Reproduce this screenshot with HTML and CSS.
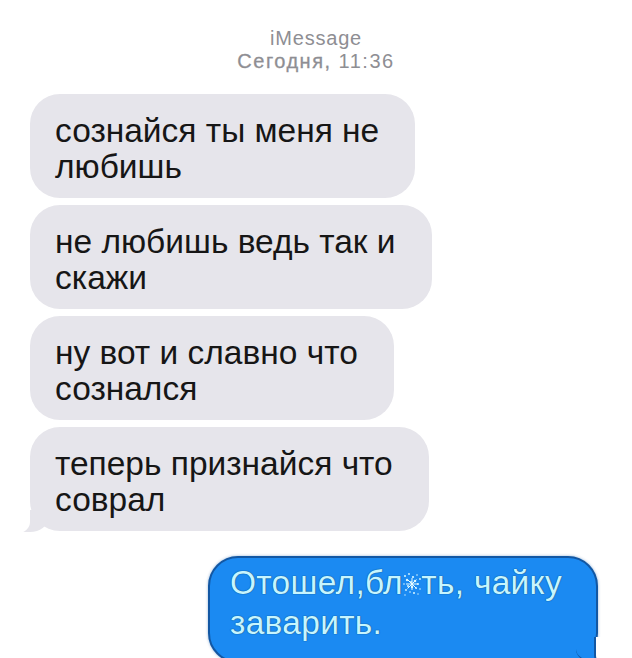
FILE: index.html
```html
<!DOCTYPE html>
<html lang="ru">
<head>
<meta charset="utf-8">
<title>iMessage</title>
<link rel="stylesheet" href="styles.css">
</head>
<body>
<div class="thread">
  <header class="thread-head">
    <div class="service">iMessage</div>
    <div class="stamp"><span class="day">Сегодня,</span> 11:36</div>
  </header>

  <div class="msgs">
    <div class="bubble in">сознайся ты меня не<br>любишь</div>
    <div class="bubble in">не любишь ведь так и<br>скажи</div>
    <div class="bubble in">ну вот и славно что<br>сознался</div>
    <div class="bubble in tail">теперь признайся что<br>соврал</div>
  </div>

  <div class="msgs out-group">
    <div class="bubble out tail">Отошел,бл<span class="censor"><span class="hidden-letter">я</span><svg class="frost" viewBox="0 0 20 26" width="20" height="26" aria-hidden="true">
      <g fill="#d8f6ff">
        <circle cx="3" cy="5" r="1"/><circle cx="7" cy="3" r="0.9"/><circle cx="11" cy="6" r="1.1"/><circle cx="15" cy="4" r="0.8"/><circle cx="18" cy="8" r="0.9"/>
        <circle cx="5" cy="9" r="1.2"/><circle cx="9" cy="11" r="1"/><circle cx="13" cy="10" r="1.3"/><circle cx="16" cy="13" r="1"/><circle cx="2" cy="13" r="0.8"/>
        <circle cx="6" cy="15" r="1"/><circle cx="10" cy="16" r="1.2"/><circle cx="14" cy="17" r="0.9"/><circle cx="18" cy="18" r="0.8"/><circle cx="4" cy="19" r="0.9"/>
        <circle cx="8" cy="21" r="0.8"/><circle cx="12" cy="22" r="1"/><circle cx="16" cy="23" r="0.7"/><circle cx="3" cy="24" r="0.7"/>
      </g>
      <g stroke="#eafcff" stroke-width="1">
        <path d="M10 7v12M4 13h12M5.5 8.5l9 9M14.5 8.5l-9 9"/>
      </g>
    </svg></span>ть, чайку<br>заварить.</div>
  </div>
</div>
</body>
</html>
```

FILE: styles.css
```css
* {
  box-sizing: border-box;
}

html, body {
  margin: 0;
  background: #ffffff;
}

body {
  width: 632px;
  height: 658px;
  overflow: hidden;
  font-family: "Liberation Sans", Arial, sans-serif;
}

.thread {
  padding-top: 27px;
}

/* service name and date line */
.thread-head {
  text-align: center;
  color: #8e8e93;
  font-size: 20px;
  line-height: 23px;
}

.thread-head .service {
  letter-spacing: 0.8px;
}

.thread-head .stamp {
  letter-spacing: 1.5px;
}

.thread-head .day {
  -webkit-text-stroke: 0.3px #8e8e93;
}

.msgs {
  display: flex;
  flex-direction: column;
  align-items: flex-start;
  gap: 7px;
  padding: 21px 0 0 30px;
}

.bubble {
  position: relative;
  font-size: 33.5px;
  line-height: 36px;
  border-radius: 30px;
  padding: 19px 36px 13px 25px;
}

.in {
  background: #e6e5eb;
  color: #161616;
}

/* tail of the last incoming bubble */
.in.tail::before {
  content: "";
  position: absolute;
  left: -8px;
  bottom: -1px;
  width: 26px;
  height: 22px;
  background: #e6e5eb;
  border-bottom-right-radius: 18px 14px;
}

.in.tail::after {
  content: "";
  position: absolute;
  left: -18px;
  bottom: -2px;
  width: 18px;
  height: 26px;
  background: #ffffff;
  border-bottom-right-radius: 12px 11px;
}

.out-group {
  align-items: flex-end;
  padding: 25px 34px 0 0;
}

.out {
  background: #1b8af2;
  color: #c6f5ff;
  border: 2px solid #1257a3;
  box-shadow: 0 0 3px rgba(18, 87, 163, 0.45);
  padding: 5px 34px 18px 20px;
  line-height: 40px;
  letter-spacing: 0.3px;
  text-shadow: 0 0 1px #0b4f86, 0 0 1px #0b4f86;
}

/* tail of the outgoing bubble */
.out.tail::before {
  content: "";
  position: absolute;
  right: -10px;
  bottom: -2px;
  width: 30px;
  height: 22px;
  background: #1b8af2;
  border-bottom: 2px solid #1257a3;
  border-bottom-left-radius: 18px 14px;
}

.out.tail::after {
  content: "";
  position: absolute;
  right: -22px;
  bottom: -6px;
  width: 22px;
  height: 30px;
  background: #ffffff;
  border-left: 2px solid #1257a3;
  border-bottom-left-radius: 13px 12px;
}

.censor {
  position: relative;
  display: inline-block;
}

.hidden-letter {
  visibility: hidden;
}

.frost {
  position: absolute;
  left: -1px;
  top: 8px;
}
```
